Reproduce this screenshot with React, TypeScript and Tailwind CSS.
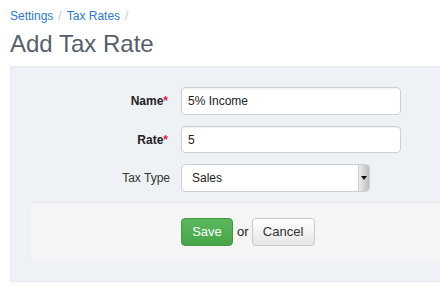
export default function App() {
  return (
    <div className="w-[440px] h-[288px] overflow-hidden bg-white font-['Liberation_Sans',Arial,sans-serif]">
      <div className="pl-[10px] pt-[8px]">
        <div className="flex items-center text-[12px] leading-[16px] text-[#2a7ad0]">
          <span>Settings</span>
          <span className="px-[5px] text-[#c4c4c4]">/</span>
          <span>Tax Rates</span>
          <span className="px-[5px] text-[#c4c4c4]">/</span>
        </div>
        <h1 className="mt-[6px] text-[24px] leading-[28px] text-[#56606d]">Add Tax Rate</h1>
      </div>

      <div className="mt-[8px] ml-[10px] w-[450px] border border-[#e6e9ee] bg-[#eef1f5] pl-[20px] pt-[20px] pb-[20px]">
        <div className="flex flex-col gap-[11px] text-[12px] text-[#333]">
          <div className="flex items-center">
            <label className="w-[139px] pr-[2px] text-right font-bold text-[#222]">
              Name<span className="text-[#e5203a]">*</span>
            </label>
            <input
              defaultValue="5% Income"
              className="ml-[11px] h-[28px] w-[220px] rounded-[4px] border border-[#cfcfcf] bg-white px-[6px] text-[12px] text-[#222] shadow-[inset_0_1px_1px_rgba(0,0,0,0.06)] outline-none"
            />
          </div>
          <div className="flex items-center">
            <label className="w-[139px] pr-[2px] text-right font-bold text-[#222]">
              Rate<span className="text-[#e5203a]">*</span>
            </label>
            <input
              defaultValue="5"
              className="ml-[11px] h-[27px] w-[220px] rounded-[4px] border border-[#cfcfcf] bg-white px-[6px] text-[12px] text-[#222] shadow-[inset_0_1px_1px_rgba(0,0,0,0.06)] outline-none"
            />
          </div>
          <div className="flex items-center">
            <label className="w-[139px] text-right text-[#333]">Tax Type</label>
            <div className="ml-[11px] flex h-[28px] w-[189px] items-stretch rounded-[4px] border border-[#cfcfcf] bg-white">
              <span className="flex flex-1 items-center pl-[10px] text-[12px] text-[#222]">Sales</span>
              <span className="flex w-[11px] items-center justify-center rounded-r-[3px] border-l border-[#d0d0d0] bg-gradient-to-r from-[#ececec] to-[#bdbdbd]">
                <svg width="6" height="4" viewBox="0 0 6 4">
                  <path d="M0 0h6L3 4z" fill="#111" />
                </svg>
              </span>
            </div>
          </div>
        </div>

        <div className="mt-[10px] flex items-center border-t border-[#e2e4e7] bg-[#f5f5f5] pl-[150px] pt-[15px] pb-[15px] text-[12px]">
          <button className="h-[28px] w-[52px] rounded-[4px] border border-[#3f9a3f] bg-gradient-to-b from-[#5cb85c] to-[#47a447] text-[13px] text-white">
            Save
          </button>
          <span className="ml-[4px] mr-[3px] text-[13px] text-[#222]">or</span>
          <button className="h-[28px] w-[63px] rounded-[4px] border border-[#c8c8c8] bg-gradient-to-b from-white to-[#e6e6e6] text-[13px] text-[#333]">
            Cancel
          </button>
        </div>
      </div>
    </div>
  );
}
